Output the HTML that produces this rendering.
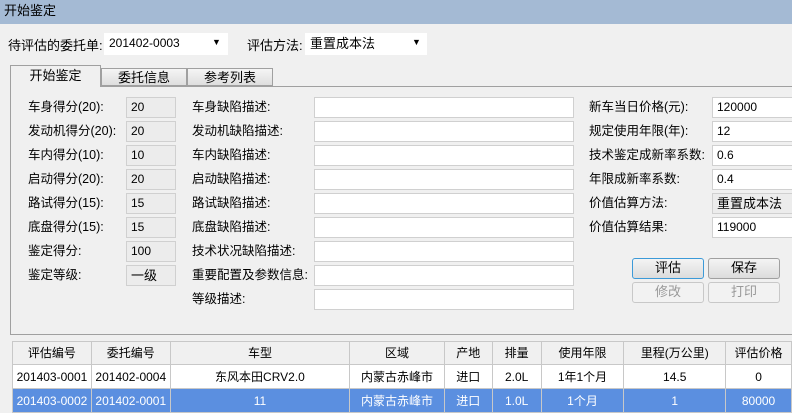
<!DOCTYPE html>
<html><head><meta charset="utf-8"><style>
*{margin:0;padding:0;box-sizing:border-box}
body{width:792px;height:412px;overflow:hidden;background:#f0f0f0;font-family:"Liberation Sans","Noto Sans CJK SC",sans-serif;font-size:12px;color:#000;position:relative}
.a{position:absolute;white-space:nowrap}
.title{left:0;top:0;width:792px;height:24px;background:#a4bad4;padding:3px 0 0 4px;font-size:13px;line-height:16px}
.in{position:absolute;height:21px;border:1px solid #d0d0d0;background:#fff;padding:0 4px;font-size:12px;line-height:19px}
.ro{background:#ececec}
.btn{position:absolute;width:72px;height:21px;border:1px solid #a0a0a0;border-radius:3px;background:linear-gradient(#f4f4f4,#dcdcdc);text-align:center;line-height:18px;font-size:13px}
.lab{line-height:24px;font-size:12.5px}
table{position:absolute;left:12px;top:341px;border-collapse:collapse;background:#fff}
td{border:1px solid #c8c8c8;height:24px;text-align:center;font-size:12px;padding:0;line-height:16px}
tr.h td{background:#f0f0f0;height:23px}
tr.s td{background:#5b8fe0;color:#fff}
</style></head><body>
<div class="a title">开始鉴定</div>
<div class="a" style="left:8px;top:35px;font-size:13px">待评估的委托单:</div>
<div class="in" style="left:104px;top:33px;width:124px;height:22px;border-color:#fff">201402-0003</div>
<div class="a" style="left:212px;top:37px;font-size:9px">▼</div>
<div class="a" style="left:247px;top:35px;font-size:13px">评估方法:</div>
<div class="in" style="left:305px;top:33px;width:122px;height:22px;border-color:#fff;font-size:13px">重置成本法</div>
<div class="a" style="left:412px;top:37px;font-size:9px">▼</div>
<div class="a" style="left:10px;top:86px;width:782px;height:249px;border:1px solid #a0a0a0;border-right:none;background:#f0f0f0"></div>
<div class="a" style="left:10px;top:65px;width:91px;height:22px;border:1px solid #a0a0a0;border-bottom:none;background:#f0f0f0;text-align:center;padding-top:1px;font-size:13px;line-height:17px">开始鉴定</div>
<div class="a" style="left:101px;top:68px;width:86px;height:18px;border:1px solid #a0a0a0;background:linear-gradient(#f5f5f5,#dedede);text-align:center;font-size:13px;line-height:17px">委托信息</div>
<div class="a" style="left:187px;top:68px;width:86px;height:18px;border:1px solid #a0a0a0;background:linear-gradient(#f5f5f5,#dedede);text-align:center;font-size:13px;line-height:17px">参考列表</div>

<div class="a lab" style="left:28px;top:95px">车身得分(20):<br>发动机得分(20):<br>车内得分(10):<br>启动得分(20):<br>路试得分(15):<br>底盘得分(15):<br>鉴定得分:<br>鉴定等级:</div>
<div class="in ro" style="left:126px;top:97px;width:50px">20</div>
<div class="in ro" style="left:126px;top:121px;width:50px">20</div>
<div class="in ro" style="left:126px;top:145px;width:50px">10</div>
<div class="in ro" style="left:126px;top:169px;width:50px">20</div>
<div class="in ro" style="left:126px;top:193px;width:50px">15</div>
<div class="in ro" style="left:126px;top:217px;width:50px">15</div>
<div class="in ro" style="left:126px;top:241px;width:50px">100</div>
<div class="in ro" style="left:126px;top:265px;width:50px;font-size:13px">一级</div>

<div class="a lab" style="left:192px;top:95px">车身缺陷描述:<br>发动机缺陷描述:<br>车内缺陷描述:<br>启动缺陷描述:<br>路试缺陷描述:<br>底盘缺陷描述:<br>技术状况缺陷描述:<br>重要配置及参数信息:<br>等级描述:</div>
<div class="in" style="left:314px;top:97px;width:260px"></div>
<div class="in" style="left:314px;top:121px;width:260px"></div>
<div class="in" style="left:314px;top:145px;width:260px"></div>
<div class="in" style="left:314px;top:169px;width:260px"></div>
<div class="in" style="left:314px;top:193px;width:260px"></div>
<div class="in" style="left:314px;top:217px;width:260px"></div>
<div class="in" style="left:314px;top:241px;width:260px"></div>
<div class="in" style="left:314px;top:265px;width:260px"></div>
<div class="in" style="left:314px;top:289px;width:260px"></div>

<div class="a lab" style="left:589px;top:95px">新车当日价格(元):<br>规定使用年限(年):<br>技术鉴定成新率系数:<br>年限成新率系数:<br>价值估算方法:<br>价值估算结果:</div>
<div class="in" style="left:712px;top:97px;width:82px">120000</div>
<div class="in" style="left:712px;top:121px;width:82px">12</div>
<div class="in" style="left:712px;top:145px;width:82px">0.6</div>
<div class="in" style="left:712px;top:169px;width:82px">0.4</div>
<div class="in ro" style="left:712px;top:193px;width:82px;font-size:13px">重置成本法</div>
<div class="in" style="left:712px;top:217px;width:82px">119000</div>

<div class="btn" style="left:632px;top:258px;border-color:#3c9ad8">评估</div>
<div class="btn" style="left:708px;top:258px">保存</div>
<div class="btn" style="left:632px;top:282px;color:#999;border-color:#c8c8c8;background:#f2f2f2">修改</div>
<div class="btn" style="left:708px;top:282px;color:#999;border-color:#c8c8c8;background:#f2f2f2">打印</div>

<table>
<tr class="h"><td style="width:79px">评估编号</td><td style="width:79px">委托编号</td><td style="width:180px">车型</td><td style="width:95px">区域</td><td style="width:48px">产地</td><td style="width:49px">排量</td><td style="width:83px">使用年限</td><td style="width:102px">里程(万公里)</td><td style="width:66px">评估价格</td></tr>
<tr><td>201403-0001</td><td>201402-0004</td><td>东风本田CRV2.0</td><td>内蒙古赤峰市</td><td>进口</td><td>2.0L</td><td>1年1个月</td><td>14.5</td><td>0</td></tr>
<tr class="s"><td>201403-0002</td><td>201402-0001</td><td>11</td><td>内蒙古赤峰市</td><td>进口</td><td>1.0L</td><td>1个月</td><td>1</td><td>80000</td></tr>
</table>
</body></html>
